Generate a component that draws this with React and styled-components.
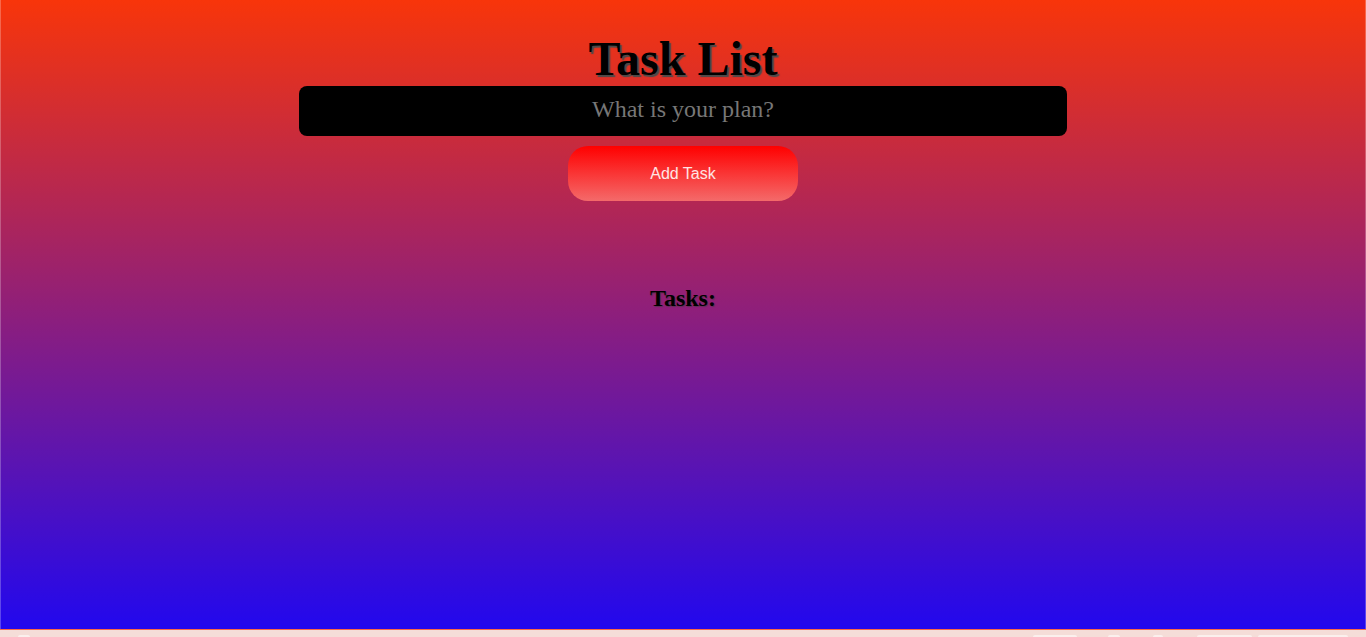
import React, { useState } from 'react';
import styled, { createGlobalStyle } from 'styled-components';

const GlobalStyle = createGlobalStyle`
    body {
        margin: 0;
        background: #f5ddd8;
        font-family: "Liberation Serif", "Times New Roman", serif;
        overflow: hidden;
    }
`

function App() {
    const [task, setTask] = useState("");
    const [tasks, setTasks] = useState([]);

    const addTask = () => {
        if (!task.trim()) return;
        setTasks([...tasks, task]);
        setTask("");
    }

    return (
        <>
            <GlobalStyle />
            <Wrapper>
                <Title>Task List</Title>
                <Input
                    placeholder="What is your plan?"
                    value={task}
                    onChange={(e) => setTask(e.target.value)}
                />
                <AddButton onClick={addTask}>Add Task</AddButton>
                <Subtitle>Tasks:</Subtitle>
                <ul>
                    {tasks.map((t, i) => (
                        <li key={i}>{t}</li>
                    ))}
                </ul>
            </Wrapper>
            <Taskbar>
                <Pill $width="12px" $gap="18px" />
                <Spacer />
                <Pill $width="44px" />
                <Pill $width="12px" $gap="31px" />
                <Pill $width="10px" $gap="33px" />
                <Pill $width="55px" $gap="34px" />
                <Pill $width="90px" $gap="6px" />
            </Taskbar>
        </>
    )
}

const Wrapper = styled.div`
    box-sizing: border-box;
    height: 630px;
    padding-top: 31px;
    display: flex;
    flex-direction: column;
    align-items: center;
    background: linear-gradient(#f8350a, #2208ee);
    border: 1px solid rgba(255, 255, 255, 0.25);
    border-top: none;

    ul {
        margin: 0;
        padding: 0;
        list-style: none;
    }
`
const Title = styled.h1`
    margin: 0;
    font-size: 48px;
    font-weight: 700;
    color: #000;
    text-shadow: 2px 2px 1px #4a4a4a;
`
const Input = styled.input`
    box-sizing: border-box;
    width: 768px;
    height: 50px;
    padding: 0 0 4px;
    border: none;
    border-radius: 8px;
    background: #000;
    color: #ddd;
    font-family: "Liberation Serif", "Times New Roman", serif;
    font-size: 24px;
    text-align: center;
    outline: none;

    &::placeholder {
        color: #777;
    }
`
const AddButton = styled.button`
    margin-top: 10px;
    width: 230px;
    height: 55px;
    border: none;
    border-radius: 20px;
    background: linear-gradient(#ff0000, #f46a6a);
    color: #ffe4e4;
    font-family: "Liberation Sans", Arial, sans-serif;
    font-size: 16px;
    cursor: pointer;
`
const Subtitle = styled.h2`
    margin: 84px 0 0;
    font-size: 24px;
    font-weight: 700;
    color: #000;
    text-shadow: 1px 1px 1px rgba(60, 60, 60, 0.6);
`
const Taskbar = styled.div`
    height: 7px;
    display: flex;
    align-items: flex-end;
    padding-right: 18px;
`
const Spacer = styled.div`
    flex: 1;
`
const Pill = styled.div`
    width: ${(p) => p.$width};
    margin-left: ${(p) => p.$gap || 0};
    height: 2px;
    border-radius: 4px 4px 0 0;
    background: rgba(255, 255, 255, 0.55);
`

export default App
